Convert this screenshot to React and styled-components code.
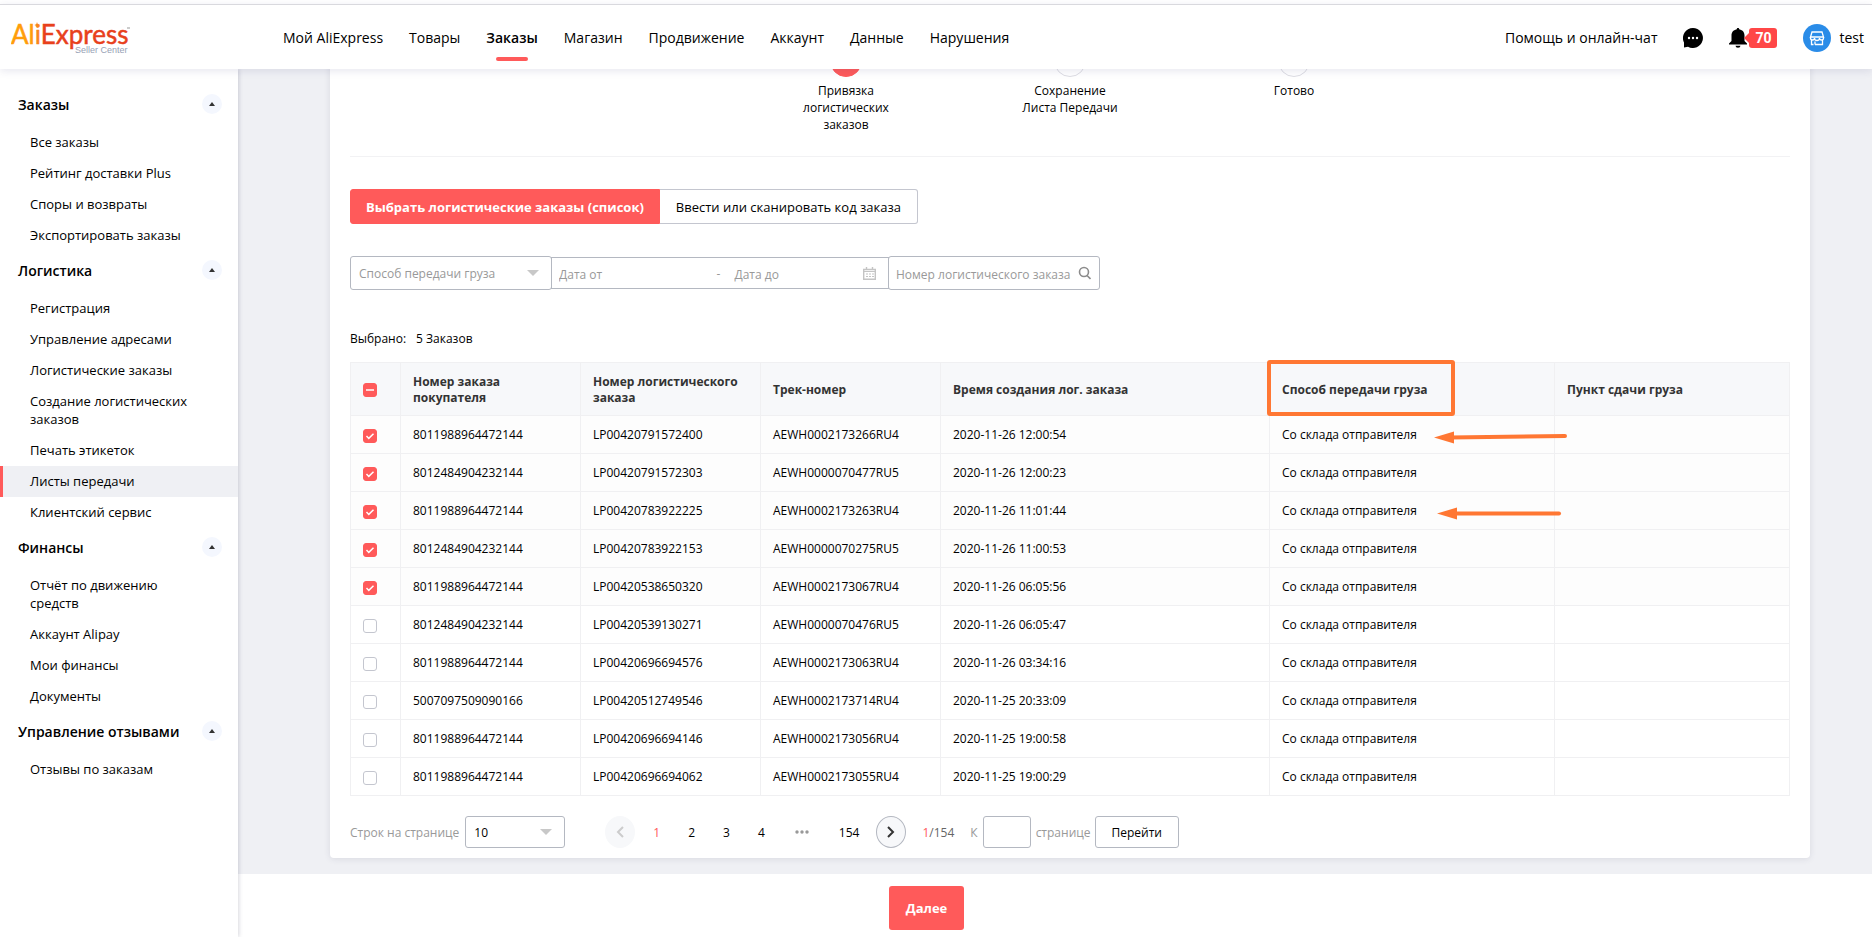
import React, { useState } from 'react';
import styled, { createGlobalStyle } from 'styled-components';

const GlobalStyle = createGlobalStyle`
    * {
        box-sizing: border-box;
    }

    body {
        margin: 0;
        font-family: "Open Sans", "Noto Sans", sans-serif;
        font-size: 12px;
        color: #000000;
        background-color: #ffffff;
    }

    button, input, select {
        font-family: inherit;
        font-size: inherit;
        color: inherit;
        margin: 0;
    }

    a {
        color: inherit;
        text-decoration: none;
    }

    ul {
        list-style: none;
        margin: 0;
        padding: 0;
    }
`;

const PageWrapper = styled.div`
    height: 100vh;
    display: flex;
    flex-direction: column;
    overflow: hidden;
    padding-top: 4px;
`;

const Header = styled.header`
    flex: none;
    height: 65px;
    display: flex;
    align-items: center;
    padding: 2px 8px 0 11px;
    background-color: #ffffff;
    border-top: 1px solid #d9d9de;
    box-shadow: 0 2px 8px rgba(60, 60, 120, 0.12);
    position: relative;
    z-index: 2;
`;

const LogoLink = styled.a`
    width: 272px;
    display: flex;
`;

const Nav = styled.nav`
    flex: 1;
    display: flex;
    gap: 26px;
`;

const NavLink = styled.a`
    display: flex;
    flex-direction: column;
    align-items: center;
    font-size: 14px;
    line-height: 20px;
    font-weight: ${props => (props.$active ? 600 : 400)};
    white-space: nowrap;

    &::after {
        content: "";
        width: 32px;
        height: 4px;
        margin: 9px 0 -13px;
        border-radius: 2px;
        background-color: ${props => (props.$active ? '#ff5a5a' : 'transparent')};
    }
`;

const HeaderTools = styled.div`
    display: flex;
    align-items: center;
    font-size: 14px;
    line-height: 20px;
`;

const IconButton = styled.button`
    display: flex;
    padding: 0;
    margin-left: 26px;
    border: none;
    background: none;
    cursor: pointer;
`;

const Badge = styled.span`
    display: flex;
    align-items: center;
    justify-content: center;
    width: 28px;
    height: 20px;
    margin-left: 2px;
    border-radius: 3px;
    background-color: #ff4747;
    color: #ffffff;
    font-family: "Roboto", sans-serif;
    font-size: 14px;
    font-weight: 700;
    position: relative;

    &::before {
        content: "";
        position: absolute;
        left: -5px;
        top: 5px;
        border: 5px solid transparent;
        border-left: none;
        border-right-color: #ff4747;
    }
`;

const UserLink = styled.a`
    display: flex;
    align-items: center;
    gap: 8px;
    margin-left: 26px;
`;

const Body = styled.div`
    flex: 1;
    min-height: 0;
    display: flex;
`;

const Sidebar = styled.aside`
    flex: none;
    width: 238px;
    padding-top: 16px;
    background-color: #ffffff;
    box-shadow: 1px 0 4px rgba(60, 60, 90, 0.2);
    position: relative;
    z-index: 1;
`;

const MenuHeading = styled.div`
    display: flex;
    align-items: center;
    justify-content: space-between;
    height: 42px;
    padding: 0 16px 4px 18px;
    font-size: 14px;
    font-weight: 600;
`;

const CollapseButton = styled.button`
    display: flex;
    align-items: center;
    justify-content: center;
    width: 20px;
    height: 20px;
    padding: 0;
    border: none;
    border-radius: 50%;
    background-color: #f4f7fe;
    cursor: pointer;
`;

const MenuLink = styled.a`
    display: block;
    padding: 6px 36px 7px 27px;
    border-left: 3px solid ${props => (props.$active ? '#ff5a5a' : 'transparent')};
    background-color: ${props => (props.$active ? '#eff0f4' : 'transparent')};
    font-size: 13px;
    line-height: 18px;
`;

const Main = styled.main`
    flex: 1;
    min-width: 0;
    display: flex;
    flex-direction: column;
    background-color: #eff0f4;
`;

const Card = styled.section`
    flex: none;
    margin: -40px 62px 16px 92px;
    padding: 16px 20px 10px;
    background-color: #ffffff;
    border-radius: 4px;
    box-shadow: 0 1px 6px rgba(60, 60, 90, 0.12);
`;

const Steps = styled.ol`
    display: flex;
    justify-content: center;
    list-style: none;
    margin: 0;
    padding: 0 0 23px;
    border-bottom: 1px solid #f2f2f4;
`;

const Step = styled.li`
    width: 224px;
    display: flex;
    flex-direction: column;
    align-items: center;
    gap: 5px;
    text-align: center;
    line-height: 17px;
`;

const StepCircle = styled.span`
    width: 32px;
    height: 32px;
    border-radius: 50%;
    border: 1px solid ${props => (props.$active ? '#ff5a5a' : '#dddde3')};
    background-color: ${props => (props.$active ? '#ff5a5a' : '#ffffff')};
`;

const StepLabel = styled.span`
    max-width: 104px;
`;

const ModeTabs = styled.div`
    display: flex;
    margin: 32px 0;
`;

const ModeTab = styled.button`
    height: 35px;
    padding: 0 ${props => (props.$active ? 15 : 16)}px;
    border: 1px solid ${props => (props.$active ? '#ff5a5a' : '#c4c6cf')};
    border-left-width: ${props => (props.$active ? '1px' : '0')};
    border-radius: ${props => (props.$active ? '3px 0 0 3px' : '0 3px 3px 0')};
    background-color: ${props => (props.$active ? '#ff5a5a' : '#ffffff')};
    color: ${props => (props.$active ? '#ffffff' : '#000000')};
    font-size: 13px;
    font-weight: ${props => (props.$active ? 700 : 400)};
    cursor: pointer;
`;

const Filters = styled.div`
    display: flex;
    align-items: center;
    font-size: 12px;
    color: #999999;
`;

const Field = styled.div`
    display: flex;
    align-items: center;
    width: ${props => props.$width}px;
    height: ${props => props.$height || 34}px;
    border: 1px solid #b4b8c1;
    border-radius: ${props => (props.$square ? 0 : '3px')};
    background-color: #ffffff;
    color: ${props => (props.$dark ? '#000000' : '#999999')};

    & + & {
        margin-left: -1px;
    }

    svg {
        flex: none;
        margin-right: ${props => props.$iconGap || 12}px;
    }
`;

const RangePart = styled.span`
    flex: 1;
    min-width: 0;
    display: flex;
    align-items: center;
`;

const RangeDash = styled.span`
    margin: 0 7px 0 4px;
`;

const Select = styled.select`
    flex: 1;
    min-width: 0;
    height: 100%;
    padding: 1px 0 0 8px;
    border: none;
    outline: none;
    background: none;
    appearance: none;
`;

const TextInput = styled.input`
    flex: 1;
    min-width: 0;
    padding: 2px 0 0 7px;
    border: none;
    outline: none;
    background: none;

    &::placeholder {
        color: #999999;
        opacity: 1;
    }
`;

const Selected = styled.p`
    display: flex;
    gap: 10px;
    margin: 40px 0 15px;
    line-height: 17px;
`;

const TableWrap = styled.div`
    position: relative;
`;

const Table = styled.table`
    width: 100%;
    table-layout: fixed;
    border-collapse: collapse;
    line-height: 16px;

    th, td {
        border: 1px solid #f0f0f2;
        padding: 0 12px;
        text-align: left;
    }

    th {
        height: 53px;
        padding-top: 2px;
        background-color: #f7f8fa;
        color: #333333;
        font-weight: 700;
    }

    td {
        height: 38px;
    }
`;

const Row = styled.tr`
    background-color: ${props => (props.$checked ? '#fdfdfd' : '#ffffff')};
`;

const Checkbox = styled.input.attrs({ type: 'checkbox' })`
    appearance: none;
    display: block;
    width: 14px;
    height: 14px;
    margin: 2px 0 0;
    border: 1px solid #c4c6cf;
    border-radius: 3px;
    background: #ffffff center / 14px 14px no-repeat;
    background-origin: border-box;
    cursor: pointer;

    th & {
        margin-top: 0;
    }

    &:checked, &:indeterminate {
        border-color: #ff5a5a;
        background-color: #ff5a5a;
    }

    &:checked {
        background-image: url("data:image/svg+xml,%3Csvg xmlns='http://www.w3.org/2000/svg' viewBox='0 0 14 14'%3E%3Cpath d='M3.5 7l2.3 2.4 4.7-4.6' fill='none' stroke='white' stroke-width='1.5'/%3E%3C/svg%3E");
    }

    &:indeterminate {
        background-image: url("data:image/svg+xml,%3Csvg xmlns='http://www.w3.org/2000/svg' viewBox='0 0 14 14'%3E%3Cpath d='M3 7h8' stroke='white' stroke-opacity='.75' stroke-width='2'/%3E%3C/svg%3E");
    }
`;

const Marks = styled.svg`
    position: absolute;
    top: -8px;
    left: 63%;
    overflow: visible;
    pointer-events: none;
`;

const Pagination = styled.div`
    display: flex;
    align-items: center;
    margin-top: 20px;
    color: #999999;
    font-size: 12px;
`;

const PageSizeLabel = styled.label`
    display: flex;
    align-items: center;
    gap: 6px;
    margin-right: 40px;
`;

const PageArrow = styled.button`
    display: flex;
    align-items: center;
    justify-content: center;
    width: 30px;
    height: 32px;
    padding: 0;
    border: 1px solid ${props => (props.disabled ? '#f7f8fa' : '#b4b8c1')};
    border-radius: 50%;
    background-color: #f7f8fa;
    color: ${props => (props.disabled ? '#cccccc' : '#333333')};
`;

const PageList = styled.div`
    display: flex;
    align-items: center;
    gap: 2px;
    padding: 0 4px 0 5px;
`;

const PageNumber = styled.button`
    padding: 0 13px;
    border: none;
    background: none;
    color: ${props => (props.$active ? '#ff5a5a' : '#000000')};
    cursor: pointer;
`;

const Ellipsis = styled.span`
    width: 44px;
    display: flex;
    justify-content: center;
`;

const PageCount = styled.span`
    margin: 0 16px;
    color: #666666;

    em {
        font-style: normal;
        color: #ff5a5a;
    }
`;

const JumpLabel = styled.label`
    display: flex;
    align-items: center;
    gap: 5px;
    margin-right: 4px;
`;

const JumpInput = styled.input`
    width: 48px;
    height: 32px;
    border: 1px solid #b4b8c1;
    border-radius: 3px;
    background-color: #ffffff;
`;

const OutlineButton = styled.button`
    height: 32px;
    padding: 0 16px;
    border: 1px solid #b4b8c1;
    border-radius: 3px;
    background-color: #ffffff;
    color: #000000;
    cursor: pointer;
`;

const ActionBar = styled.footer`
    flex: 1;
    display: flex;
    justify-content: center;
    align-items: flex-start;
    padding: 12px 257px 0 0;
    background-color: #ffffff;
`;

const PrimaryButton = styled.button`
    height: 44px;
    padding: 0 17px;
    border: none;
    border-radius: 3px;
    background-color: #ff5a5a;
    color: #ffffff;
    font-size: 13px;
    font-weight: 700;
    cursor: pointer;
`;

const navItems = ['Мой AliExpress', 'Товары', 'Заказы', 'Магазин', 'Продвижение', 'Аккаунт', 'Данные', 'Нарушения'];

const menu = [
    { title: 'Заказы', items: ['Все заказы', 'Рейтинг доставки Plus', 'Споры и возвраты', 'Экспортировать заказы'] },
    {
        title: 'Логистика',
        items: [
            'Регистрация',
            'Управление адресами',
            'Логистические заказы',
            'Создание логистических заказов',
            'Печать этикеток',
            'Листы передачи',
            'Клиентский сервис',
        ],
    },
    { title: 'Финансы', items: ['Отчёт по движению средств', 'Аккаунт Alipay', 'Мои финансы', 'Документы'] },
    { title: 'Управление отзывами', items: ['Отзывы по заказам'] },
];

const steps = ['Привязка логистических заказов', 'Сохранение Листа Передачи', 'Готово'];

const orders = [
    ['8011988964472144', 'LP00420791572400', 'AEWH0002173266RU4', '2020-11-26 12:00:54'],
    ['8012484904232144', 'LP00420791572303', 'AEWH0000070477RU5', '2020-11-26 12:00:23'],
    ['8011988964472144', 'LP00420783922225', 'AEWH0002173263RU4', '2020-11-26 11:01:44'],
    ['8012484904232144', 'LP00420783922153', 'AEWH0000070275RU5', '2020-11-26 11:00:53'],
    ['8011988964472144', 'LP00420538650320', 'AEWH0002173067RU4', '2020-11-26 06:05:56'],
    ['8012484904232144', 'LP00420539130271', 'AEWH0000070476RU5', '2020-11-26 06:05:47'],
    ['8011988964472144', 'LP00420696694576', 'AEWH0002173063RU4', '2020-11-26 03:34:16'],
    ['5007097509090166', 'LP00420512749546', 'AEWH0002173714RU4', '2020-11-25 20:33:09'],
    ['8011988964472144', 'LP00420696694146', 'AEWH0002173056RU4', '2020-11-25 19:00:58'],
    ['8011988964472144', 'LP00420696694062', 'AEWH0002173055RU4', '2020-11-25 19:00:29'],
];

function Logo() {
    return (
        <svg width="124" height="44" viewBox="0 -4 124 44" role="img" aria-label="AliExpress Seller Center">
            <text x="0" y="24" fontFamily="Lato, sans-serif" fontSize="26" strokeWidth="0.5" fill="#e8401c" stroke="#e8401c">
                <tspan fill="#ff9d0a" stroke="#ff9d0a">Al</tspan>
                <tspan fill="#f9861a" stroke="#f9861a">i</tspan>
                Express
            </text>
            <path d="M26 2l.7 2.300 2 .7-2 .7-.7 2.300-.7-2.300-2-.7 2-.7z" fill="#f9861a" />
            <path d="M116 8h3" stroke="#999" />
            <text x="64" y="33" fontFamily="Liberation Sans, sans-serif" fontSize="9" fill="#97a1b5">Seller Center</text>
        </svg>
    );
}

function DownArrow() {
    return (
        <svg width="12" height="8" viewBox="0 0 12 8">
            <path d="M0 1h12L6 7z" fill="#c8c8c8" />
        </svg>
    );
}

function Sidemenu() {
    return (
        <Sidebar>
            {menu.map(group => (
                <nav key={group.title} aria-label={group.title}>
                    <MenuHeading>
                        {group.title}
                        <CollapseButton aria-label="Свернуть">
                            <svg width="6" height="4" viewBox="0 0 6 4">
                                <path d="M0 4l3-4 3 4z" fill="#333" />
                            </svg>
                        </CollapseButton>
                    </MenuHeading>
                    <ul>
                        {group.items.map(item => (
                            <li key={item}>
                                <MenuLink href="#" $active={item === 'Листы передачи'}>{item}</MenuLink>
                            </li>
                        ))}
                    </ul>
                </nav>
            ))}
        </Sidebar>
    );
}

function OrdersTable() {
    const [checked, setChecked] = useState([0, 1, 2, 3, 4]);
    const someChecked = checked.length > 0 && checked.length < orders.length;

    const toggle = index => {
        setChecked(checked.includes(index) ? checked.filter(i => i !== index) : [...checked, index]);
    };

    const toggleAll = () => {
        setChecked(checked.length === orders.length ? [] : orders.map((_, i) => i));
    };

    return (
        <>
            <Selected>
                <span>Выбрано:</span>
                <span>{checked.length} Заказов</span>
            </Selected>
            <TableWrap>
                <Table>
                    <colgroup>
                        <col width="50" />
                        <col width="180" />
                        <col width="180" />
                        <col width="180" />
                        <col width="329" />
                        <col width="285" />
                        <col width="235" />
                    </colgroup>
                    <thead>
                        <tr>
                            <th>
                                <Checkbox
                                    aria-label="Выбрать все"
                                    ref={el => { if (el) el.indeterminate = someChecked; }}
                                    checked={checked.length === orders.length}
                                    onChange={toggleAll}
                                />
                            </th>
                            <th>Номер заказа покупателя</th>
                            <th>Номер логистического заказа</th>
                            <th>Трек-номер</th>
                            <th>Время создания лог. заказа</th>
                            <th>Способ передачи груза</th>
                            <th>Пункт сдачи груза</th>
                        </tr>
                    </thead>
                    <tbody>
                        {orders.map((order, index) => (
                            <Row key={order[1]} $checked={checked.includes(index)}>
                                <td>
                                    <Checkbox
                                        aria-label={order[1]}
                                        checked={checked.includes(index)}
                                        onChange={() => toggle(index)}
                                    />
                                </td>
                                {order.map(value => <td key={value}>{value}</td>)}
                                <td>Со склада отправителя</td>
                                <td />
                            </Row>
                        ))}
                    </tbody>
                </Table>
                <Marks width="320" height="180" viewBox="1257 354 320 180">
                    <rect x="1269" y="362" width="184" height="52" rx="1" fill="none" stroke="#ff7733" strokeWidth="4" />
                    <path d="M1450 437.500L1565 436" stroke="#ff7733" strokeWidth="4" strokeLinecap="round" />
                    <path d="M1434 437.500l20-6v12z" fill="#ff7733" />
                    <path d="M1453 513.500H1559" stroke="#ff7733" strokeWidth="4" strokeLinecap="round" />
                    <path d="M1437 513.500l20-6v12z" fill="#ff7733" />
                </Marks>
            </TableWrap>
        </>
    );
}

function Pager() {
    return (
        <Pagination>
            <PageSizeLabel>
                Строк на странице
                <Field $width={100} $height={32} $dark>
                    <Select defaultValue="10">
                        <option>10</option>
                        <option>20</option>
                        <option>50</option>
                    </Select>
                    <DownArrow />
                </Field>
            </PageSizeLabel>
            <PageArrow disabled aria-label="Назад">
                <svg width="8" height="12" viewBox="0 0 8 12" fill="none" stroke="currentColor" strokeWidth="2">
                    <path d="M7 1L2 6l5 5" />
                </svg>
            </PageArrow>
            <PageList>
                <PageNumber $active>1</PageNumber>
                <PageNumber>2</PageNumber>
                <PageNumber>3</PageNumber>
                <PageNumber>4</PageNumber>
                <Ellipsis>
                    <svg width="14" height="4" viewBox="0 0 14 4" fill="#999">
                        <circle cx="2" cy="2" r="1.700" />
                        <circle cx="7" cy="2" r="1.700" />
                        <circle cx="12" cy="2" r="1.700" />
                    </svg>
                </Ellipsis>
                <PageNumber>154</PageNumber>
            </PageList>
            <PageArrow aria-label="Вперёд">
                <svg width="8" height="12" viewBox="0 0 8 12" fill="none" stroke="currentColor" strokeWidth="2">
                    <path d="M1 1l5 5-5 5" />
                </svg>
            </PageArrow>
            <PageCount><em>1</em>/154</PageCount>
            <JumpLabel>
                К
                <JumpInput type="text" />
                странице
            </JumpLabel>
            <OutlineButton>Перейти</OutlineButton>
        </Pagination>
    );
}

function App() {
    return (
        <PageWrapper>
            <GlobalStyle />
            <Header>
                <LogoLink href="#"><Logo /></LogoLink>
                <Nav>
                    {navItems.map(item => (
                        <NavLink key={item} href="#" $active={item === 'Заказы'}>{item}</NavLink>
                    ))}
                </Nav>
                <HeaderTools>
                    <a href="#">Помощь и онлайн-чат</a>
                    <IconButton aria-label="Чат">
                        <svg width="20" height="20" viewBox="0 0 20 20">
                            <path d="M10 0a10 10 0 1 1-5 18.700L1 19.500V14.500A10 10 0 0 1 10 0z" fill="#000" />
                            <circle cx="6" cy="10" r="1.200" fill="#fff" />
                            <circle cx="10" cy="10" r="1.200" fill="#fff" />
                            <circle cx="14" cy="10" r="1.200" fill="#fff" />
                        </svg>
                    </IconButton>
                    <IconButton aria-label="Уведомления">
                        <svg width="18" height="20" viewBox="0 0 18 20">
                            <path d="M9 0c.8 0 1.200.5 1.200 1.200C14 2 15.500 4.500 15.500 7.500V13L18 15.500V16.500H0V15.500L2.500 13V7.500C2.500 4.500 4 2 7.800 1.200 7.800.5 8.200 0 9 0zM6.500 17.800h5a2.500 2 0 0 1-5 0z" fill="#000" />
                        </svg>
                        <Badge>70</Badge>
                    </IconButton>
                    <UserLink href="#">
                        <svg width="28" height="28" viewBox="0 0 28 28">
                            <circle cx="14" cy="14" r="14" fill="#2a8ce8" />
                            <g fill="none" stroke="#fff" strokeWidth="1.300">
                                <path d="M9 8h10l1.500 5h-13z" />
                                <path d="M7.500 13v1a2 2 0 0 0 4 0 2 2 0 0 0 5 0 2 2 0 0 0 4 0v-1" />
                                <path d="M8.500 16v4.500h2M12 20.500v-3M12 20.500h7.500V16" />
                            </g>
                        </svg>
                        test
                    </UserLink>
                </HeaderTools>
            </Header>
            <Body>
                <Sidemenu />
                <Main>
                    <Card>
                        <Steps>
                            {steps.map((label, index) => (
                                <Step key={label}>
                                    <StepCircle $active={index === 0} />
                                    <StepLabel>{label}</StepLabel>
                                </Step>
                            ))}
                        </Steps>
                        <ModeTabs>
                            <ModeTab $active>Выбрать логистические заказы (список)</ModeTab>
                            <ModeTab>Ввести или сканировать код заказа</ModeTab>
                        </ModeTabs>
                        <Filters>
                            <Field $width={202}>
                                <Select aria-label="Способ передачи груза">
                                    <option>Способ передачи груза</option>
                                </Select>
                                <DownArrow />
                            </Field>
                            <Field $width={338} $height={32} $square>
                                <RangePart>
                                    <TextInput placeholder="Дата от" aria-label="Дата от" />
                                </RangePart>
                                <RangeDash>-</RangeDash>
                                <RangePart>
                                    <TextInput placeholder="Дата до" aria-label="Дата до" />
                                    <svg width="13" height="13" viewBox="0 0 13 13" fill="none" stroke="#c4c4c4">
                                        <path d="M.7 2.500h11.600v9.800H.7zM3.500 0v3M9.500 0v3" strokeWidth="1.400" />
                                        <path d="M1 4.500h11" />
                                        <path d="M3 7h8M3 9.500h8" strokeDasharray="2 1" strokeWidth="1.200" />
                                    </svg>
                                </RangePart>
                            </Field>
                            <Field $width={212} $iconGap={8}>
                                <TextInput placeholder="Номер логистического заказа" aria-label="Номер логистического заказа" />
                                <svg width="18" height="14" viewBox="0 0 18 14" fill="none" stroke="#8c8c8c" strokeWidth="1.600">
                                    <circle cx="11" cy="6" r="4.500" />
                                    <path d="M14 9.500l3.500 3.500" />
                                </svg>
                            </Field>
                        </Filters>
                        <OrdersTable />
                        <Pager />
                    </Card>
                    <ActionBar>
                        <PrimaryButton>Далее</PrimaryButton>
                    </ActionBar>
                </Main>
            </Body>
        </PageWrapper>
    );
}

export default App;
